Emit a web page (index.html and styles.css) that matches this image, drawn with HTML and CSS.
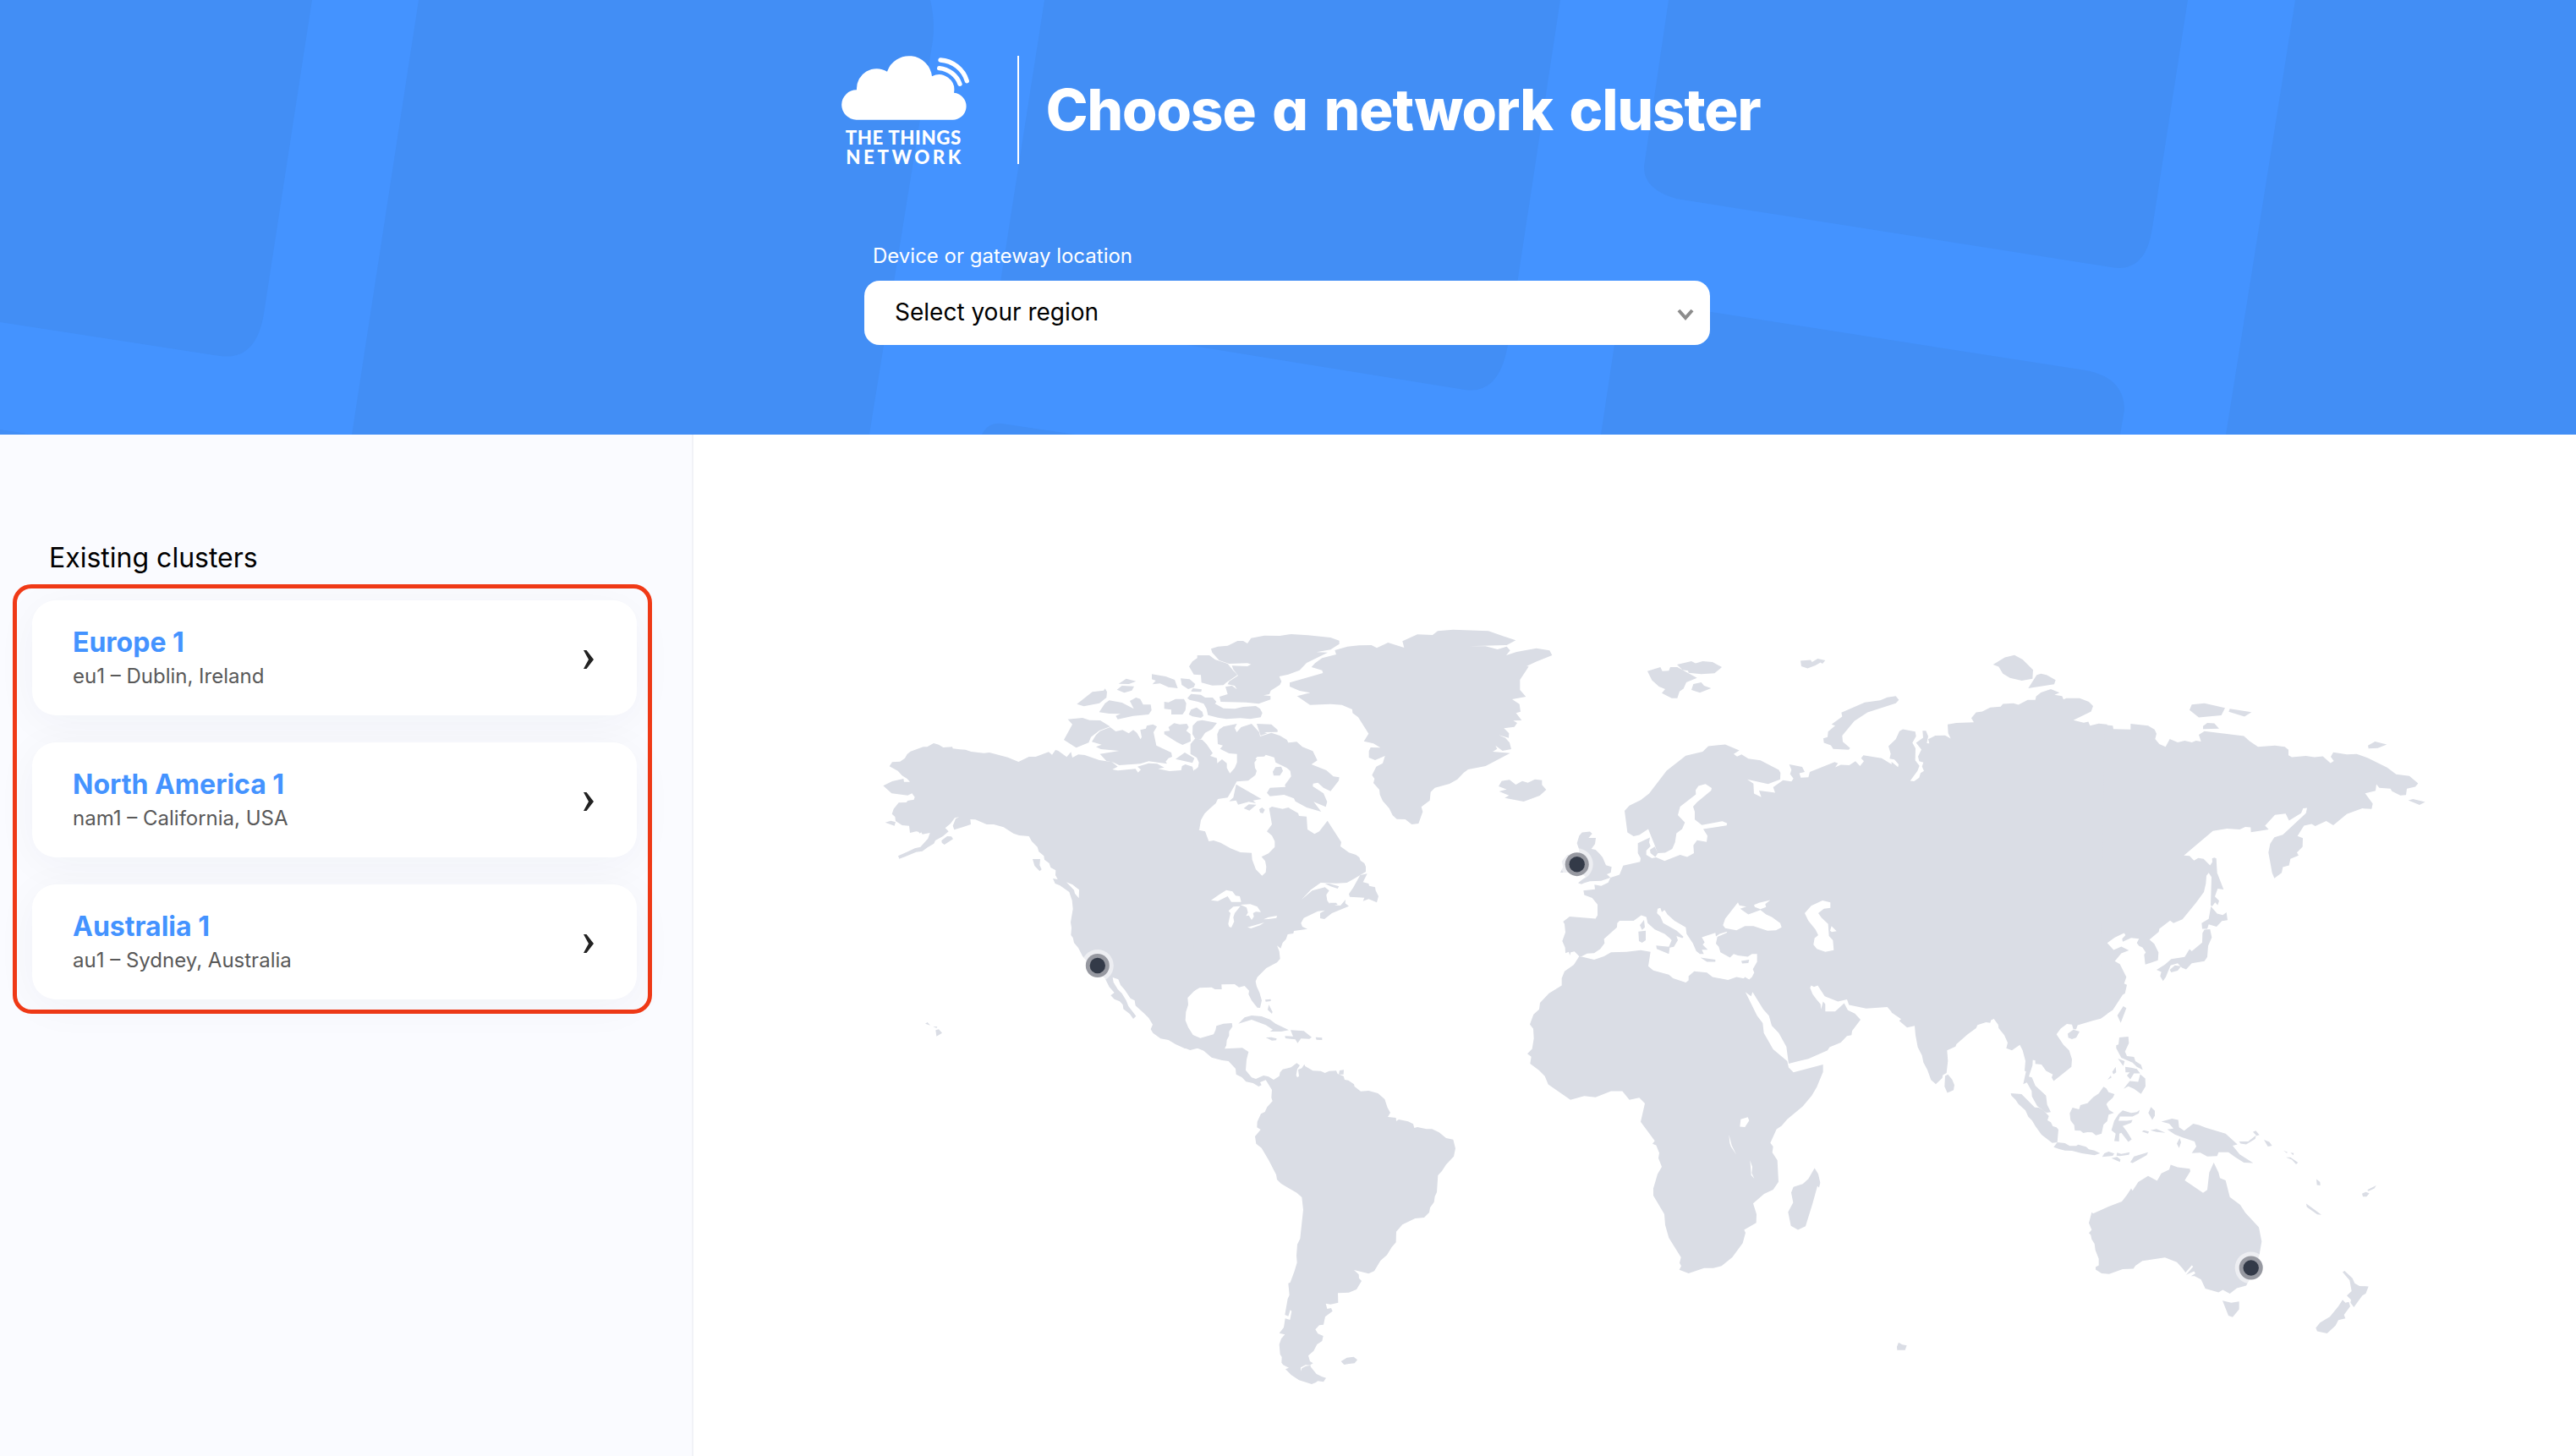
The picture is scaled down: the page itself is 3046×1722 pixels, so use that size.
FILE: index.html
```html
<!DOCTYPE html>
<html lang="en">
<head>
  <meta charset="UTF-8">
  <title>Choose a network cluster</title>
  <link rel="stylesheet" href="styles.css">
</head>
<body>
  <header class="header">
    <svg class="header-pattern" viewBox="0 0 3046 514" aria-hidden="true">
      <path d="M0 0H369L312 371Q303 427 260 421L0 381Z"/>
      <path d="M495 0H1100Q1106 25 1103 48L1028 514H416Z"/>
      <path d="M1235 0H1845L1783 408Q1773 467 1732 461L1404 408L1177 372Z"/>
      <path d="M1161 514Q1168 499 1185 501L1272 514Z"/>
      <path d="M1973 0H2587L2545 270Q2537 324 2496 316L1982 235Q1938 222 1945 190Z"/>
      <path d="M1917 354L2030 370L2460 437Q2512 444 2512 485L2507 514H1893Z"/>
      <path d="M2714 0H3046V514H2632Z"/>
      <path d="M0 508L39 514H0Z"/>
    </svg>

    <div class="header-row">
      <svg class="logo" viewBox="105 75 455 390">
        <path d="M158 305A53 53 0 0 1 159 199A71 71 0 0 1 267 134A82 82 0 0 1 426 151A54 54 0 0 1 504 209A48 48 0 0 1 495 305Z"/>
        <path class="logo-wave" d="M456 93A105 105 0 0 1 550 167"/>
        <path class="logo-wave" d="M452 122A86 86 0 0 1 525 178"/>
        <text x="119" y="392" textLength="410" lengthAdjust="spacing">THE THINGS</text>
        <text x="121" y="461" textLength="408" lengthAdjust="spacing">NETWORK</text>
      </svg>
      <h1 class="title">Choose a network cluster</h1>
    </div>

    <div class="region">
      <label class="region-label">Device or gateway location</label>
      <div class="region-select">
        <span class="region-value">Select your region</span>
        <svg class="chevron" viewBox="0 0 20 14"><path d="M2 2L10 11L18 2"/></svg>
      </div>
    </div>
  </header>

  <main class="main">
    <aside class="sidebar">
      <h2 class="sidebar-title">Existing clusters</h2>
      <div class="clusters">
        <div class="card">
          <div>
            <div class="card-name">Europe 1</div>
            <div class="card-info">eu1 – Dublin, Ireland</div>
          </div>
          <svg class="arrow" viewBox="0 0 12 22"><path d="M0 0H3.5L12 11L3.5 22H0L6 11Z"/></svg>
        </div>
        <div class="card">
          <div>
            <div class="card-name">North America 1</div>
            <div class="card-info">nam1 – California, USA</div>
          </div>
          <svg class="arrow" viewBox="0 0 12 22"><path d="M0 0H3.5L12 11L3.5 22H0L6 11Z"/></svg>
        </div>
        <div class="card">
          <div>
            <div class="card-name">Australia 1</div>
            <div class="card-info">au1 – Sydney, Australia</div>
          </div>
          <svg class="arrow" viewBox="0 0 12 22"><path d="M0 0H3.5L12 11L3.5 22H0L6 11Z"/></svg>
        </div>
      </div>
    </aside>

    <svg class="map" viewBox="820 514 2226 1208">
      <!-- western North America -->
      <g transform="translate(1020 720) scale(.33333)">
        <path d="M95 559L105 544L133 542L150 530L158 516L170 506L215 490L229 490L252 477L270 482L286 492L318 490L320 496L345 499L365 500L385 507L430 512L450 510L515 527L553 543L590 525L614 525L660 508L672 518L684 501L693 503L724 526L739 508L744 528L765 517L788 519L840 537L885 544L905 560L886 570L905 574L968 568L977 581L987 571L975 560L1015 548L1045 550L1070 563L1048 568L1088 576L1130 573L1133 558L1145 552L1170 560L1174 575L1180 568V1352L1153 1380L1155 1405L1147 1430L1145 1460L1155 1485L1172 1512L1198 1523L1245 1510L1252 1495L1255 1480L1280 1472L1310 1470L1312 1482L1300 1500L1300 1515L1292 1530L1290 1550L1283 1560H1143L1110 1545L1085 1530L1057 1525L1030 1505L1022 1492L1029 1475L1015 1452L1000 1437L968 1408L965 1390L950 1382L930 1352L915 1335L907 1315L887 1308L890 1325L905 1350L920 1365L935 1390L943 1410L970 1445L960 1455L948 1438L925 1420L923 1405L912 1393L893 1385L880 1372L893 1362L875 1342L860 1312L790 1245L780 1232L765 1203L750 1185L746 1167L739 1158L741 1132L738 1112L746 1065L743 1035L733 1005L700 982L683 975L675 957L692 960L684 945L685 928L667 918L662 903L645 890L643 877L625 862L620 845L600 825L590 807L555 804L535 797L500 775L465 765L440 765L400 748L382 747L384 765L355 775L325 784L320 770L330 745L343 739L327 742L312 762L293 778L305 790L285 807L258 822L253 833L230 847L212 860L190 863L150 880L130 887L126 877L160 862L185 850L205 845L232 815L239 795L212 800L208 793L203 797L198 791L190 790L168 795L165 770L140 768L117 753L115 738L104 728L110 710L128 688L155 687L160 681L182 677L185 668L175 655L160 662L103 655L73 628L105 612L145 603L147 614L168 614L158 603L140 592L125 575Z"/>
        <path d="M80 758L100 752L117 757L113 770ZM280 822L300 807L315 808L321 817L290 837L281 830ZM603 888H630L628 910L635 925L628 931L610 912ZM222 1472L230 1467L240 1478ZM250 1482L265 1483L262 1488ZM259 1495L270 1492L282 1505L262 1517Z"/>
        <path class="water" d="M723 970L745 979L768 997L767 1027L753 1010L750 998Z"/>
      </g>

      <!-- Arctic islands -->
      <g transform="translate(1240 730) scale(.33333)">
        <path d="M68 362L120 357L145 365L183 366L218 388L180 402L150 425L142 445L98 463L54 435L84 380Z"/>
        <path d="M153 442L168 418L182 404L218 390L238 405L262 400L284 412L300 400L313 410L326 433L330 425L325 400L345 395L348 385L370 380L384 388L372 408L382 455L435 480L438 495L425 500L415 512L420 520L355 511L325 520L250 525L230 515L205 510L182 485L250 474L185 468L168 460L188 452Z"/>
        <path d="M100 308L155 265L195 260L200 253L207 265L205 285L180 305L125 316ZM248 236L275 218L310 227L285 237ZM242 257L260 243L303 245L295 260L268 268Z"/>
        <path d="M179 337L200 305L215 295L260 303L302 325L288 297L310 285L325 290L335 310L362 310L365 330L355 345L300 350L245 362L238 350L255 343L215 342Z"/>
        <path d="M366 202L415 210L447 222L458 252L425 248L395 235L368 238L380 225L366 220ZM468 217L500 220L520 237L515 248L495 255L472 240ZM505 262L512 252L543 256L541 265L508 264Z"/>
        <path d="M410 300L425 302L450 290L480 290L488 305L485 330L475 345H435V328L410 325ZM497 345L505 328L525 320L545 335L549 350L540 357L510 352Z"/>
        <path d="M492 287L505 272L540 275L555 285L582 285L595 300L590 307L620 323L660 325L690 318L735 315L750 325L758 340L752 355L715 361L680 358L630 361L600 356L565 347L560 325L550 307L530 300L500 293Z"/>
        <path d="M410 405L430 403L425 390L445 376L465 380L490 378L497 390L488 403L503 415L504 440L475 453L455 443L410 415ZM450 503L483 480L517 500L510 517L490 512L470 508ZM527 368L545 365L597 375L580 397L555 410L540 433L520 431L510 415L511 385Z"/>
        <path d="M503 450L520 430L545 435L560 450L582 482L573 492L597 500L598 518L615 504L632 518L632 535L643 554L660 535L668 515L668 485L640 483L608 467L618 455L600 450L598 415L605 398L620 388L668 378L660 393L667 408L683 390L720 378L747 408L750 423L790 410L820 420L845 435L850 445L880 442L900 460L937 475L953 508L932 522L985 543L1010 565L1031 568L1029 580L1000 617L975 605L955 587L938 590L937 600L975 625L988 655L983 673L940 655L967 690L915 675L875 653L870 643L835 630L785 635L774 623L785 605L840 602L838 595L860 565L857 545L845 535L805 515L800 497L770 488L765 494L740 495L732 503L720 492L738 505L730 515L732 535L738 545L733 560L708 580L667 583L655 605L635 640L600 645L593 660L570 680L553 697L540 720L534 755H515V545L530 532L533 515L525 498L503 485Z"/>
        <path d="M795 548L805 532L825 530L831 545L820 562L798 562ZM738 378L790 380L812 400L812 407L765 408L775 412L752 420ZM665 593L755 645L725 650L735 660L710 655L672 665L665 650L640 653L655 640ZM692 678L710 664L737 665L712 686ZM747 682L757 675L767 683L760 696L750 693Z"/>
        <path d="M498 175L510 157L527 145V135L570 135L590 150L635 165L655 190L670 205L630 232L620 241L580 242L542 232L540 205L515 203Z"/>
        <path d="M576 112L600 104L635 101L670 84L690 84L705 93L718 74L765 65L820 66L860 60L920 64L1000 72L1031 83V95L1000 115L950 124L990 125L915 162L890 188L850 203L818 210L826 228L820 240L788 260L783 273L762 277L787 280L787 292L745 307L700 302L610 300L606 282L635 273L627 247L650 243L668 256L660 243L635 238L640 228L672 207L655 185L650 172L705 174L718 167L705 163L640 165L605 153L580 125Z"/>
      </g>

      <!-- eastern North America, Caribbean, Greenland, Iceland -->
      <g transform="translate(1400 720) scale(.33333)">
        <path d="M35 775L53 785L75 790L88 825L105 822L130 830L165 850L200 864L240 866L242 890L255 925L277 947L290 935L292 915L288 895L275 880L300 868L322 845V825L312 805L294 790L312 765L302 708L312 702L350 710L370 705L405 725L408 735L435 737L438 783L463 799L480 790L495 770L509 752L558 828L555 843L585 865L610 873L622 882L626 893L640 903L645 915V933L605 957L578 972L540 974L485 972L450 997L417 1032L455 1000L500 988L515 1000L505 1015L508 1035L515 1045L540 1052L555 1053L573 1032L572 1045L585 1055L525 1080L498 1101L483 1098V1080L500 1070L475 1073L425 1097L415 1115L420 1128L438 1136L390 1143L388 1152L368 1155L362 1172L350 1185L343 1205L330 1195L338 1215L341 1242L330 1255L292 1275L260 1307L254 1322L258 1340L268 1362L276 1390L270 1416L260 1415L240 1390L229 1368L231 1355L215 1338L195 1343L180 1332L133 1333L134 1350L110 1350L98 1343L55 1345L35 1357Z"/>
        <path d="M650 940L635 970L655 975L657 983L678 988L680 1000L690 1020L684 1042L655 1030L635 1037L640 1025L588 1022L585 1012L600 990L625 945ZM500 975H515L550 985L545 993L520 985ZM515 1043H540L545 1050L525 1052Z"/>
        <path class="water" d="M96 1034L125 1014L150 998L172 1003L183 1018L198 1020L203 1040L168 1040L155 1020L120 1037ZM157 1118L165 1080L158 1072L175 1057L200 1055L180 1080L175 1095L178 1110L168 1131L160 1128ZM200 1050L235 1048L260 1057L273 1076L255 1075L245 1080L248 1092L240 1104L230 1088L220 1090L227 1078L222 1060ZM225 1130L285 1113L270 1123L238 1134ZM282 1102L300 1094L330 1089L328 1097L300 1101Z"/>
        <path d="M193 1472L215 1450L240 1443L275 1446L305 1457L325 1472L372 1495L345 1500H305L315 1493L290 1477L240 1458ZM378 1495L425 1498L453 1520L445 1526L415 1525L403 1541L395 1528L360 1524L358 1516L387 1517ZM290 1521L310 1520L329 1525L327 1531L312 1532ZM467 1520L490 1522V1530L470 1529ZM288 1387L308 1385V1392L290 1394ZM301 1405L314 1430L312 1437L297 1423Z"/>
        <path d="M375 262L493 228L490 218L452 207L465 193L490 175L540 162L535 147L580 134L620 130L665 129L684 139L724 120L781 138L775 115L828 91L882 93L900 79L955 74L1080 79L1177 112L1145 129L1010 133L1070 133L1112 144L1145 134L1157 148L1143 165L1180 153L1250 140L1297 148L1306 165L1248 188L1215 204L1223 205L1192 252V288L1213 312L1164 321L1190 338L1194 365L1178 370L1198 396L1168 397L1182 405L1172 419L1135 424L1153 442L1152 458L1116 448L1140 458L1155 475L1161 498L1130 504L1105 485L1111 497L1095 507L1157 512L1070 558L1008 570L992 582L970 605L942 621L890 635L875 650L872 680L842 703L847 720L832 762L808 765L785 747L755 746L740 733L728 708L705 682L695 660L693 642L672 618L676 603L667 590L682 560L705 548L713 522L678 537L656 528V505L662 492L697 493L672 478L638 470L655 443L618 385L598 370L597 357L560 341L520 338L447 341L401 310L448 298L410 291L375 276Z"/>
        <path d="M1116 630L1127 611L1155 607L1177 624L1200 611L1220 617L1245 605L1270 608V625L1285 642L1262 663L1205 684L1138 671L1153 662L1118 648L1145 641Z"/>
      </g>

      <!-- Central and South America -->
      <g transform="translate(1400 1220) scale(.33333)">
        <path d="M0 45V58L22 66L48 59L70 68L98 92L135 102L158 105L183 132L185 152L205 162L220 178L245 183L265 195L275 190L270 180L290 172L312 207L310 235L314 247L295 268L287 285L273 292L260 320L259 340L272 348L252 372L256 398L275 413L300 455L327 508L330 525L345 540L400 572L418 588L423 632L412 735L402 755L399 795L401 820L392 850L377 890L370 893L374 935L368 948L358 1005L370 1010L377 988L382 992L376 1023L359 1018L354 1050L338 1070L358 1075L345 1090L338 1110L341 1145L347 1155L346 1175L352 1183L372 1193L360 1198L380 1218L408 1237L453 1251L468 1245L475 1240L495 1243L504 1229L490 1225L470 1215L450 1190L448 1183L458 1177L447 1170L441 1150L460 1133L472 1110L490 1098L494 1080L475 1072L466 1057L480 1042L495 1040L501 1012L527 992L522 981L508 984L503 965L520 968L547 962L546 928L585 926L612 915L630 885L621 875L620 862L603 846L655 859L675 850L697 813L720 793L737 765L752 748L753 710L775 685L820 663L852 660L870 642L873 625L887 605L890 585L897 570L901 510L915 495L930 472L957 443L963 415L955 383L930 378L905 358L880 346L860 346L828 339L817 342L813 328L795 319L762 312L753 318L752 306L723 303L732 288L722 270L712 240L688 219L655 210L627 212L605 195L603 187L583 173L570 171L566 158L545 150L540 139L515 140L500 147L485 140L457 139L430 123L427 116L418 130L405 135L408 158L402 163L398 155L402 133L411 120L400 112L380 127L350 134L341 145L338 158L318 171L300 160L282 156L255 168L240 163L219 137L222 100L229 72L207 58L145 61L148 45Z"/>
        <path d="M549 152L552 138L567 136L566 152ZM557 1170L578 1157L602 1154L615 1165L605 1177L585 1179L568 1182Z"/>
        <path class="water" d="M414 1206V1192L432 1183L450 1184L432 1187L418 1195Z"/>
      </g>

      <!-- Africa, Europe, Middle East -->
      <g transform="translate(1780 760) scale(.33333 .5102)">
        <path d="M271 728L315 735L350 727L375 718L430 717L480 713L515 717L507 750L525 760L580 770L595 778L640 788L650 783V773L670 762L715 765L735 775L790 782L820 775L865 781L853 812L893 865L913 882L917 905L950 943L1000 970L1005 985L1022 996L1127 978V995L1105 1030L1087 1050L1055 1075L1000 1105L980 1120L962 1128L940 1160L950 1168L947 1182L965 1200L969 1250L950 1268L918 1278L879 1300L891 1325L890 1345L847 1361L852 1368L842 1392L805 1425L767 1445L738 1450L705 1450L650 1462L617 1454L624 1445L618 1438L623 1425L580 1380L567 1350L564 1325L525 1282V1265L540 1232L555 1215L543 1195L546 1183L535 1165L522 1162L530 1155L480 1111L495 1068L475 1055L440 1060L415 1040L375 1040L320 1054L280 1051L231 1060L205 1048L152 1024L140 1005L120 992L88 976L92 960L78 953L95 942L101 918L99 895L87 885L100 862L120 850L123 835L155 813L200 795V778L210 762L243 747L262 727Z"/>
        <path d="M1097 1218L1110 1232L1117 1252L1113 1263L1107 1260L1090 1300L1065 1353L1038 1361L1013 1352L1003 1320L1021 1298L1014 1275L1022 1262L1055 1255L1075 1243Z"/>
        <path d="M205 647L228 635L320 640L327 632V607L308 592L280 585L277 575L318 572L316 561L340 564L365 556L373 545L405 538L418 517L478 508L480 500L470 488V465L513 452L510 463L515 472L500 482V492L520 500L535 498L565 506L620 492L645 497L669 488L667 470L680 458L714 462L717 448L702 432L785 424L787 419L770 414L697 423L672 410V392L666 380L680 370L730 343L732 337L710 328L685 332L675 342L676 352L620 380L612 400L637 417L627 432L607 442L602 463L592 478L567 487L540 488L530 470L507 432L475 446L455 449L433 440L423 390L440 378L480 365L510 350L572 297L640 262L700 253L720 240L780 236L830 250L810 258L822 264L838 259L862 269L905 273L970 295L976 302L975 317L932 328L858 317L880 327L882 350L908 358L900 343L957 348L950 335L985 319L1015 322L1022 315L1010 305L1015 295L1007 282L1053 288L1062 300L1043 303L1048 313L1075 312L1080 300L1168 277L1180 280L1170 289L1190 283L1220 284L1242 275L1258 286L1272 275L1262 268L1270 261L1335 268L1390 290V862L1370 856L1355 845L1280 848L1219 840L1212 827L1180 832L1133 820L1108 795L1095 798L1085 795L1081 800L1090 815L1105 828L1118 838L1120 850L1127 832L1135 838V855L1170 855L1202 836L1215 852L1240 860L1260 874L1230 900L1228 910L1212 912L1190 927L1150 938L1143 945L1075 965L1040 970L1005 976L997 937L970 905L945 888L935 865L915 850L877 810L872 820L855 812L830 790L850 775L865 781L875 775L883 765L878 757L893 740V722L875 722L860 728L825 725L810 722L797 730L763 718L757 705L747 698L752 682L785 673L787 670L760 675L747 681L745 673L697 683L707 695L700 700L718 712L697 712L704 722L690 722L677 715L665 697L643 675L640 660L600 645L575 630L565 620L555 625L550 615L540 617L538 627L550 635L560 650L608 668L632 682L628 685L607 680L612 690L598 705L583 707L580 722L537 710L535 702L580 705L590 690L583 685L565 675L530 665L505 650L500 636L482 632L455 645L405 645L397 650L396 660L370 675L350 687L352 697L337 710L315 720L290 721L271 727H262L245 716L232 718L229 725L225 717L213 720L212 707L202 692L213 672L210 652Z"/>
        <path class="water" d="M772 655L780 640L825 602L830 609L855 612L833 617L862 630L905 620L925 630L945 636L975 650L980 660L960 667L930 668L880 657L850 657L820 667L780 662ZM882 608L900 603L940 597L922 606L925 613L905 618L885 613ZM1062 627L1085 610L1125 598L1153 602V615L1130 617L1110 627L1122 638L1145 652L1148 680L1162 690L1165 713L1135 717L1105 710L1093 700L1097 685L1110 678L1100 665L1075 645ZM1152 668L1157 657L1175 669L1158 671ZM832 1122L835 1105L860 1100L865 1108L850 1123ZM793 1140L803 1165L819 1187L800 1168L796 1160ZM868 1200L876 1215L874 1230L883 1242L872 1235L870 1215Z"/>
        <path d="M477 655L492 643L495 660L485 666ZM472 670L498 668V690L485 696L474 692ZM692 730L745 735V740L715 740ZM837 738L865 735L862 743L840 744ZM513 480L530 473L541 488L532 497L515 488Z"/>
        <path d="M254 465L262 448L272 440L300 438L308 443L295 453L321 453L318 467L305 478L320 480L335 490L345 498L357 516L377 520L374 533L360 537L373 545L340 552L300 553L280 557L270 560L258 557L285 543L262 530V480ZM195 533L205 520L200 507L220 492L245 492L250 520L240 533Z"/>
        <path d="M504 66L550 57L557 66L580 65L585 57L610 57L680 82L642 92L632 107L618 113L610 129H590L555 117L567 108L545 102L520 87ZM609 51L660 43L675 48L700 43L735 45L768 57L742 71L695 73L650 70L648 65L628 63ZM660 110L667 96L695 92L705 100L730 106L690 116ZM1047 42L1083 40L1088 45L1108 37L1135 41L1125 49L1118 46L1100 53L1072 60L1050 55Z"/>
      </g>

      <!-- Asia -->
      <g transform="translate(2140 760) scale(.33333 .35714)">
        <path d="M48 317L63 313L65 295L90 275L77 271L115 245L112 232L195 198L250 191L275 181L305 177L316 190L305 201L205 231L158 260L115 308L117 328L143 349L138 355L83 352L75 340L50 332Z"/>
        <path d="M290 395L313 412L315 403L300 387L283 384L287 368L279 343L305 320L318 293L330 287L374 295L377 310L364 332L375 350L374 390L389 408L382 425L356 458L370 459L388 447L393 432L405 425L398 410L403 397L388 393L384 377L396 354L377 332L402 315L400 292L412 292L420 310L415 333L424 334L420 320L445 308L480 307L500 318L491 300L489 271L520 266L582 264L573 250L590 231L612 228L640 215L677 212L685 203L722 201L740 206L773 190H800L803 178L820 165L855 154L886 166L868 173L895 177L900 188L910 184H957L990 196L1005 210L998 228L935 257L972 265L988 262L994 275L1025 268L1055 271V1230L1032 1245L1003 1252L950 1267L945 1280H935L930 1265L912 1263L890 1278L875 1297L900 1332L920 1350L930 1380L928 1405L865 1452L858 1440L862 1430L838 1418L822 1397L800 1395V1384L791 1382L790 1400L777 1437L788 1440L800 1467L838 1500L842 1530L855 1555L840 1557L807 1535L788 1503L787 1485L770 1457L757 1462L767 1420L762 1418L765 1385L755 1350L745 1332L717 1350L697 1343L702 1325L690 1300L670 1277L668 1265L653 1246L643 1250L640 1259L625 1257L595 1266L590 1277L560 1297L520 1330L517 1338L487 1350L490 1385L485 1425L472 1432L470 1442L447 1462L430 1448L417 1415L403 1390L398 1367L383 1340L375 1300L372 1269L345 1275L317 1252L324 1247L290 1225Z"/>
        <path d="M480 1435L490 1430L505 1447L513 1465L510 1482L488 1491L478 1470ZM915 1295L935 1282L957 1288L945 1308L930 1313L917 1308ZM1091 1235L1112 1204L1123 1210L1103 1259ZM650 73L692 49L726 41L755 56L792 90L790 120L752 126L710 117L685 103L670 80ZM775 151L805 107L820 103L840 107L872 124L867 138Z"/>
      </g>

      <!-- Sumatra, Java, Borneo, Kerguelen -->
      <g transform="translate(2220 1270) scale(.33333)">
        <path d="M473 69L511 72L558 119L572 120L590 130L608 150L603 165L615 172L622 186L635 190L642 198L638 243L620 245L582 216L560 185L548 165L535 152L525 130L500 107L490 92L475 77Z"/>
        <path d="M625 260L638 243L665 246L682 256H705L712 251L740 259L750 268L770 272L790 282L770 289L725 282L690 273L665 272L645 267ZM797 295L805 282L820 276L840 283L835 291ZM848 290L850 280L865 284L895 278L892 287L860 292ZM830 299L850 295L862 304L860 313Z"/>
        <path d="M682 140L692 120L715 126L720 111L745 104L765 83L785 70L802 46L812 52L820 65L841 72L835 85L818 100L812 108L822 128L839 139L820 145L815 168L802 180L795 212L775 218L762 208L745 207L730 210L720 202L700 201L698 182L685 165Z"/>
        <path d="M75 953L88 961L104 964L98 980H70L69 968Z"/>
      </g>

      <!-- East Asia and Oceania -->
      <g transform="translate(2460 800) scale(.33333 .5102)">
        <path d="M85 112L115 114L117 122L178 123V110L240 114L263 123L270 133L265 145L280 157L302 163L317 145L345 153L370 149L395 153L410 149L428 151L420 135L440 127L580 138L600 150L630 163L690 160L725 163L738 170V183L750 187L800 184L830 187L860 185L887 201L899 196L888 186L897 176L945 181L980 180L1020 189L1088 211L1120 227L1167 231L1198 248L1188 256L1158 260L1155 275L1135 276L1105 266L1100 260L1060 258L1050 250L1047 265L1010 271L1037 295L1033 307L1000 306L945 319L897 345L872 335L833 347L820 342L793 346L770 370L789 375L788 395L768 408L774 415L745 423L740 438L718 442L714 455L688 468L680 455L667 408L673 388L688 373L718 367L800 317L804 305L790 306L783 317L740 334L728 318L690 321L655 346L668 355L605 361L604 350L585 349L565 355L520 353L470 358L367 415L387 416L403 427L418 421L437 423L460 438L468 430L467 422L475 420L482 422L485 455L508 494L487 492L477 510L492 520L487 530L478 524L467 533L462 530L465 465L455 455L447 462L445 480L438 500L410 525L362 563L330 572L318 566L280 585L278 592L245 610L262 620L277 640L275 658L230 668L226 645L232 640L220 628L208 625L200 618L208 608L180 606L150 615L148 608L160 600L155 595L122 605L95 618L118 634L145 626L172 635L145 642L122 660L140 667L163 697L155 712L165 715L158 735L150 738L115 773L70 793Z"/>
        <path d="M387 78L395 65L440 62L513 73L500 90L420 95ZM526 82L530 75L607 83L582 93ZM435 115L450 108L475 109L492 121L435 122ZM1020 160L1045 151L1087 158L1055 166L1022 167ZM1163 287L1180 284L1223 291L1203 298Z"/>
        <path d="M463 533L485 550L505 553L518 547L522 565L502 567L483 580L455 575L450 585H432L430 572L455 562ZM440 587L460 586L466 605L453 625L450 650L440 660L395 665L375 679L360 675L345 665L320 670L312 682L303 697L293 706L283 695L287 685L270 680L300 668L322 655L370 650L387 632L395 637L432 617L433 595ZM317 680L335 670L357 672L345 682L322 686Z"/>
        <path d="M138 837L170 835L172 850L158 870L165 880L190 882L195 892L215 900L221 912L200 905L185 895L145 884L127 862V855L135 853ZM133 886L157 892L152 903ZM159 905L180 907L200 910L212 920L190 920L177 934L165 925L175 918L160 918ZM153 956L175 938L205 940L212 922L230 932L231 950L215 968L190 956L170 950ZM113 917L125 905L127 918L117 922ZM96 935L108 925L110 930Z"/>
        <path d="M135 1015L150 1006L180 1012L200 1010L210 1005L207 1013L185 1020L140 1020L135 1030L165 1030L185 1028L180 1035L150 1042L165 1055L182 1073L170 1079L145 1058L138 1060L137 1078L120 1077L125 1060L110 1052L120 1030ZM241 1012L250 998L264 1007V1018L255 1028ZM218 1055L225 1052L243 1055L240 1060ZM248 1052L270 1049L302 1058L270 1056ZM177 1126L190 1113L240 1103L235 1110L185 1128ZM342 1083L352 1070L357 1080L350 1093Z"/>
        <path d="M287 1032L325 1025L347 1028L350 1045L368 1053L400 1037L420 1040L445 1046L515 1060L557 1085L540 1088L565 1108L613 1128L580 1127L550 1115L525 1103L490 1103L485 1112L450 1113L425 1104L395 1105L411 1090L405 1078L360 1068L335 1062L308 1050L330 1048L315 1037ZM563 1078L595 1078L623 1064L620 1072L588 1085L568 1083ZM612 1056L622 1053L635 1063L625 1065ZM651 1074L670 1079L680 1088L665 1090ZM720 1099L735 1103L732 1105ZM745 1104L757 1105L755 1110ZM729 1115L745 1115L772 1127L765 1131L750 1120ZM837 1165L850 1172L851 1180L839 1179ZM801 1222L835 1238L855 1248L840 1247L803 1230ZM999 1199L1012 1195L1025 1198L1015 1206H1002ZM1018 1190L1049 1180L1043 1187L1022 1193Z"/>
        <path d="M30 1267L40 1242L45 1245L100 1229L147 1217L165 1202L180 1187L185 1192L205 1172L240 1158L272 1169L287 1152L315 1143L320 1132L345 1138L388 1141L390 1147L370 1168L435 1197L450 1190L457 1150L473 1127L490 1150L495 1163L515 1168L530 1207L567 1225L585 1243L633 1277L643 1310L635 1340L620 1375L588 1412L555 1418L530 1431L505 1422L490 1428L443 1419L428 1398L405 1390H392L408 1384L403 1379L375 1387L400 1368L395 1365L373 1382L362 1372L342 1358L300 1347L220 1355L195 1366L188 1373L150 1374L102 1385L75 1384L54 1375V1369L65 1365V1350L53 1330L50 1315L40 1305L37 1295L30 1290L40 1283Z"/>
        <path d="M504 1447L535 1452L563 1449V1467L540 1485L525 1482ZM930 1381L937 1378L965 1395L973 1407L990 1413L1022 1414L1012 1431L1000 1435L970 1462L958 1452L960 1445L945 1435L962 1425L955 1400ZM835 1510L850 1498L885 1484L915 1460L930 1445L940 1452L952 1450L957 1460L935 1480L940 1488L915 1492L905 1505L875 1523L840 1518Z"/>
      </g>

      <g class="pin"><circle class="halo" cx="1864.7" cy="1022.2" r="19"/><circle class="ring" cx="1864.7" cy="1022.2" r="14"/><circle class="dot" cx="1864.7" cy="1022.2" r="9.2"/></g>
      <g class="pin"><circle class="halo" cx="1297.8" cy="1142" r="19"/><circle class="ring" cx="1297.8" cy="1142" r="14"/><circle class="dot" cx="1297.8" cy="1142" r="9.2"/></g>
      <g class="pin"><circle class="halo" cx="2661.7" cy="1499.5" r="19"/><circle class="ring" cx="2661.7" cy="1499.5" r="14"/><circle class="dot" cx="2661.7" cy="1499.5" r="9.2"/></g>
    </svg>
  </main>
</body>
</html>
```
FILE: styles.css
```css
* {
  box-sizing: border-box;
}
body {
  margin: 0;
  background: #fff;
  font-family: Inter, "Liberation Sans", sans-serif;
  color: #000;
}
.header {
  position: relative;
  height: 514px;
  padding-top: 65px;
  background: #4493ff;
  overflow: hidden;
}
.header-pattern {
  position: absolute;
  top: 0;
  left: 0;
  width: 3046px;
  height: 514px;
  fill: #428ef5;
}
.header-row {
  position: relative;
  display: flex;
  width: 1056px;
  height: 130px;
  margin: 0 auto;
}
.logo {
  flex: none;
  width: 151.67px;
  height: 130px;
  margin-right: 56px;
  fill: #fff;
  overflow: visible;
}
.logo text {
  font-family: Lato, sans-serif;
  font-weight: 900;
  font-size: 67px;
}
.logo-wave {
  fill: none;
  stroke: #fff;
  stroke-width: 16;
  stroke-linecap: round;
}
.title {
  flex: none;
  margin: 1px 0;
  padding-left: 32px;
  border-left: 2px solid #fff;
  color: #fff;
  font-size: 67px;
  font-weight: 800;
  line-height: 128px;
  letter-spacing: -1px;
  word-spacing: 6px;
  white-space: nowrap;
  font-feature-settings: "cv11";
}
.region {
  position: relative;
  width: 1000px;
  margin: 93px auto 0;
  left: -1px;
}
.region-label {
  display: block;
  height: 44px;
  padding-left: 10px;
  color: #fff;
  font-size: 24px;
  line-height: 30px;
}
.region-select {
  display: flex;
  align-items: center;
  justify-content: space-between;
  height: 76px;
  padding: 0 19px 0 36px;
  background: #fff;
  border-radius: 18px;
  font-size: 28px;
}
.region-value {
  margin-bottom: 3px;
}
.chevron {
  width: 20px;
  height: 14px;
  margin-top: 4px;
  fill: none;
  stroke: #8c8c8c;
  stroke-width: 4;
}
.main {
  display: flex;
  height: 1208px;
}
.sidebar {
  width: 820px;
  padding: 126px 47px 0 15px;
  background: #fafbff;
  border-right: 2px solid #f1f2f7;
}
.sidebar-title {
  margin: 0 0 11px;
  padding-left: 43px;
  font-size: 32px;
  font-weight: 400;
  line-height: 40px;
}
.clusters {
  display: flex;
  flex-direction: column;
  gap: 32px;
  height: 508px;
  padding: 14px 13px 0 18px;
  border: 5px solid #f03a17;
  border-radius: 22px;
}
.card {
  display: flex;
  align-items: center;
  justify-content: space-between;
  height: 136px;
  padding: 0 51px 0 48px;
  background: #fff;
  border-radius: 28px;
  box-shadow: 0 8px 50px rgba(30, 40, 80, 0.045);
}
.card-name {
  margin-top: 2px;
  color: #4493ff;
  font-size: 32px;
  font-weight: 700;
  line-height: 40px;
}
.card-info {
  margin-top: 2px;
  color: #595959;
  font-size: 24px;
  line-height: 36px;
}
.arrow {
  width: 12px;
  height: 22px;
  margin-top: 4px;
  fill: #222;
}
.map {
  flex: none;
  width: 2226px;
  height: 1208px;
  fill: #dadde5;
}
.water {
  fill: #fff;
}
.halo {
  fill: #fff;
  fill-opacity: 0.5;
}
.ring {
  fill: #9799a1;
}
.dot {
  fill: #333a48;
}
```
